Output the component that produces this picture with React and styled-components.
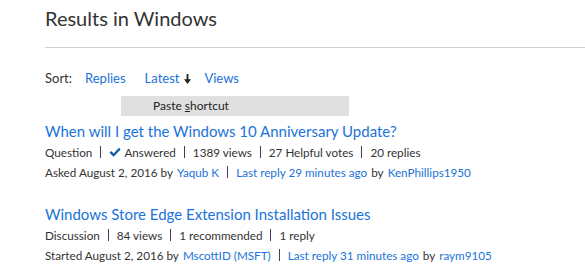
import React from 'react';
import styled, { createGlobalStyle } from 'styled-components';

const GlobalStyle = createGlobalStyle`
  html, body {
    margin: 0;
    padding: 0;
    background: #fff;
  }
  body {
    font-family: "Segoe UI", Lato, "Noto Sans", sans-serif;
    color: #333;
  }
`;

const Page = styled.div`
  position: relative;
  width: 585px;
  height: 276px;
  overflow: hidden;
  padding-left: 45px;
  box-sizing: border-box;
`;

const Header = styled.h1`
  margin: 0;
  padding-top: 4px;
  height: 48px;
  box-sizing: border-box;
  font-size: 20px;
  font-weight: 400;
  line-height: 28px;
  color: #333;
  border-bottom: 1px solid #d2d2d2;
`;

const SortBar = styled.div`
  display: flex;
  align-items: center;
  margin-top: 20px;
  height: 20px;
  font-size: 13px;
`;

const SortLabel = styled.span`
  margin-right: 13px;
`;

const SortLink = styled.a`
  color: #1a73d9;
  text-decoration: none;
  margin-right: ${(p) => (p.$gap ? p.$gap : 0)}px;
`;

const Arrow = styled.svg`
  width: 7px;
  height: 10px;
  margin: 1px 13px 0 5px;
  fill: #222;
`;

const ContextItem = styled.div`
  position: absolute;
  left: 121px;
  top: 96px;
  width: 228px;
  height: 20px;
  background: #e0e0e0;
  font-size: 12px;
  line-height: 20px;
  color: #222;
  padding-left: 32px;
  box-sizing: border-box;
`;

const Underlined = styled.span`
  text-decoration: underline;
`;

const List = styled.div`
  display: flex;
  flex-direction: column;
  gap: 21px;
  margin-top: 32px;
`;

const Post = styled.div`
  display: flex;
  flex-direction: column;
`;

const PostTitle = styled.a`
  font-size: 15px;
  line-height: 22px;
  color: #1a73d9;
  text-decoration: none;
`;

const MetaRow = styled.div`
  display: flex;
  align-items: center;
  height: 20px;
  font-size: 11.7px;
  color: #333;
  white-space: nowrap;
`;

const MetaLink = styled.a`
  color: #1a73d9;
  text-decoration: none;
`;

const Sep = styled.span`
  display: inline-block;
  width: 1px;
  height: 12px;
  background: #4a3a5a;
  margin: 0 8px;
`;

const Check = styled.svg`
  width: 12px;
  height: 11px;
  margin-right: 3px;
  fill: #0f5ea8;
`;

const Gap = styled.span`
  display: inline-block;
  width: 4px;
`;

const CheckIcon = () => (
  <Check viewBox="0 0 12 11">
    <path d="M0.5 5.8 L2.2 4.1 L4.6 6.5 L10 0.8 L11.6 2.4 L4.6 9.8 Z" />
  </Check>
);

const DownArrow = () => (
  <Arrow viewBox="0 0 7 10">
    <rect x="2.6" y="0" width="1.8" height="6" />
    <path d="M0 5.2 L7 5.2 L3.5 10 Z" />
  </Arrow>
);

const posts = [
  {
    title: 'When will I get the Windows 10 Anniversary Update?',
    stats: ['Question', 'answered', '1389 views', '27 Helpful votes', '20 replies'],
    verb: 'Asked',
    author: 'Yaqub K',
    last: 'Last reply 29 minutes ago',
    lastBy: 'KenPhillips1950',
  },
  {
    title: 'Windows Store Edge Extension Installation Issues',
    stats: ['Discussion', '84 views', '1 recommended', '1 reply'],
    verb: 'Started',
    author: 'MscottID (MSFT)',
    last: 'Last reply 31 minutes ago',
    lastBy: 'raym9105',
  },
];

const App = () => (
  <>
    <GlobalStyle />
    <Page>
      <Header>Results in Windows</Header>
      <SortBar>
        <SortLabel>Sort:</SortLabel>
        <SortLink href="#" $gap={19}>Replies</SortLink>
        <SortLink href="#">Latest</SortLink>
        <DownArrow />
        <SortLink href="#">Views</SortLink>
      </SortBar>
      <ContextItem>
        Paste <Underlined>s</Underlined>hortcut
      </ContextItem>
      <List>
        {posts.map((p) => (
          <Post key={p.title}>
            <PostTitle href="#">{p.title}</PostTitle>
            <MetaRow>
              {p.stats.map((s, i) => (
                <React.Fragment key={s}>
                  {i > 0 && <Sep />}
                  {s === 'answered' ? (
                    <>
                      <CheckIcon />
                      Answered
                    </>
                  ) : (
                    s
                  )}
                </React.Fragment>
              ))}
            </MetaRow>
            <MetaRow>
              {p.verb} August 2, 2016 by<Gap />
              <MetaLink href="#">{p.author}</MetaLink>
              <Sep />
              <MetaLink href="#">{p.last}</MetaLink>
              <Gap />by<Gap />
              <MetaLink href="#">{p.lastBy}</MetaLink>
            </MetaRow>
          </Post>
        ))}
      </List>
    </Page>
  </>
);

export default App;
